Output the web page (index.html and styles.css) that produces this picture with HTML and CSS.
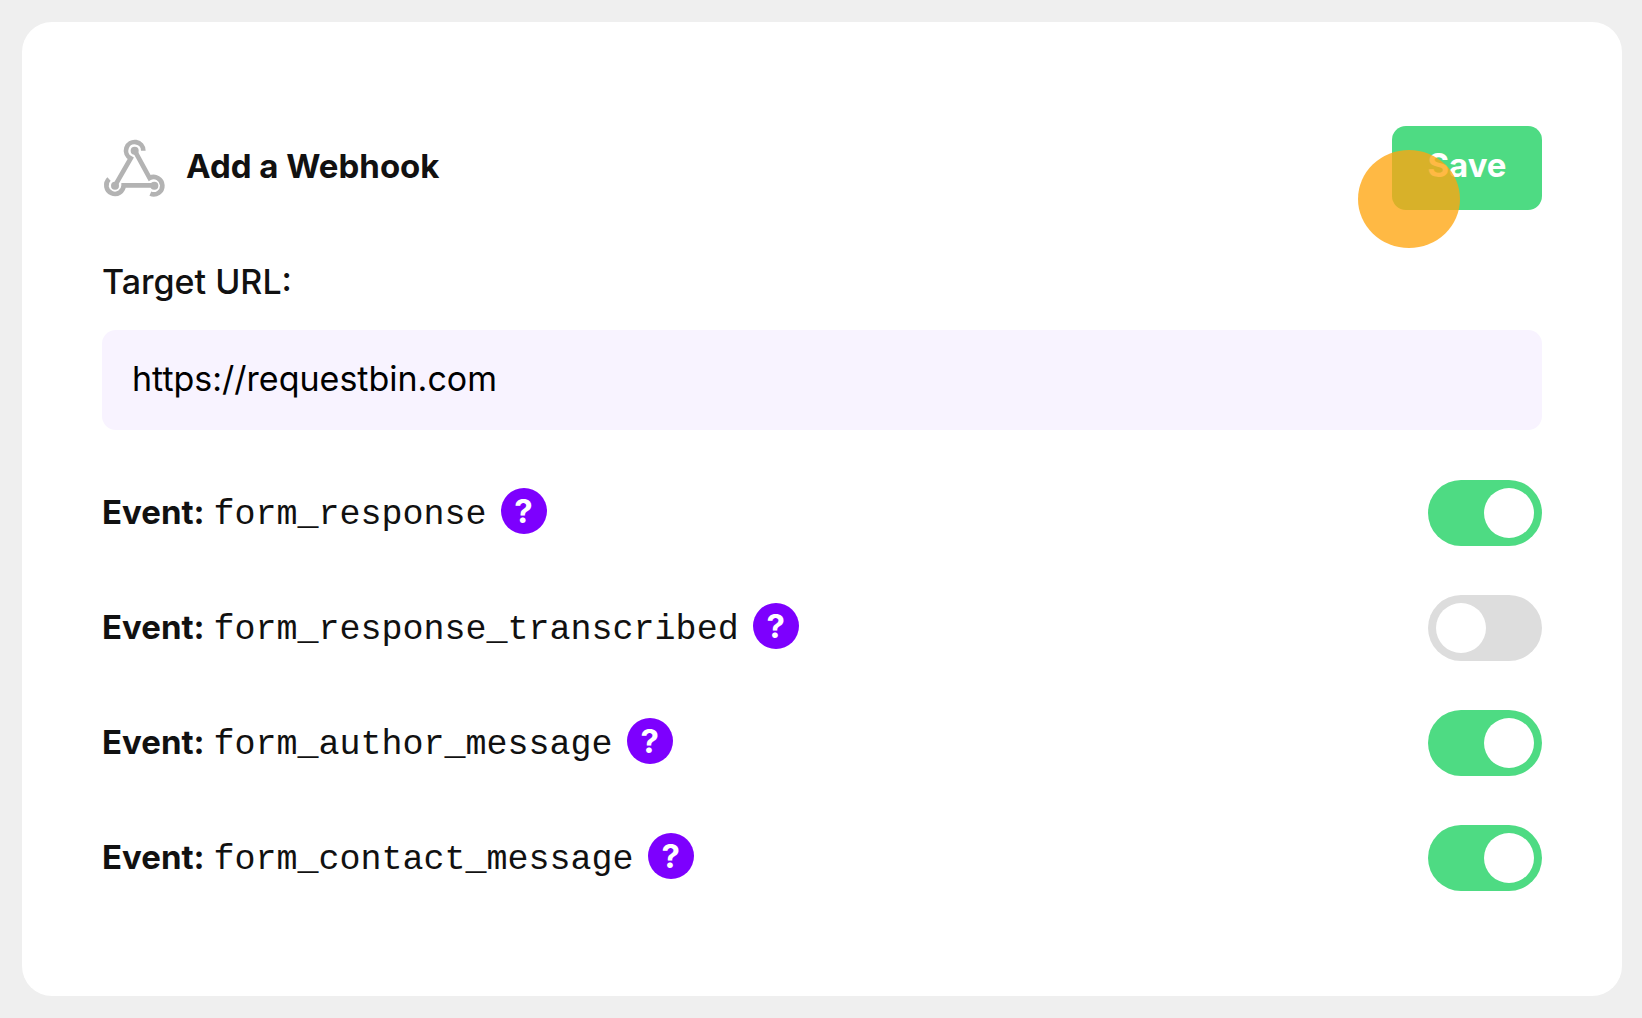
FILE: index.html
```html
<!DOCTYPE html>
<html lang="en">
<head>
<meta charset="utf-8">
<meta name="viewport" content="width=device-width, initial-scale=1">
<title>Add a Webhook</title>
<link rel="stylesheet" href="styles.css">
</head>
<body>
<main class="card">
  <form class="form">
    <header class="header">
      <svg class="logo" viewBox="36 54 195 183" aria-hidden="true">
        <g fill="none" stroke="#b3b3b3" stroke-width="14">
          <path d="M160 92A26 26 0 1 0 122 115L75 197"/>
          <path d="M134 92L179 174A26 26 0 1 1 181 221"/>
          <path d="M57 177A26 26 0 1 0 101 196H193"/>
        </g>
        <g fill="#b3b3b3">
          <circle cx="134" cy="92" r="12"/>
          <circle cx="75" cy="197" r="12"/>
          <circle cx="193" cy="197" r="12"/>
        </g>
      </svg>
      <h1 class="title">Add a Webhook</h1>
      <div class="save-wrap">
        <button class="save" type="button">Save</button>
        <span class="click-marker" aria-hidden="true"></span>
      </div>
    </header>

    <label class="label" for="target-url">Target URL:</label>
    <input class="url" id="target-url" type="text" value="https://requestbin.com">

    <div class="events">
      <div class="event">
        <label class="event-label" for="e1"><strong>Event:</strong> <code>form_response</code></label>
        <button class="help" type="button" aria-label="About form_response">?</button>
        <input class="toggle" id="e1" type="checkbox" checked>
      </div>
      <div class="event">
        <label class="event-label" for="e2"><strong>Event:</strong> <code>form_response_transcribed</code></label>
        <button class="help" type="button" aria-label="About form_response_transcribed">?</button>
        <input class="toggle" id="e2" type="checkbox">
      </div>
      <div class="event">
        <label class="event-label" for="e3"><strong>Event:</strong> <code>form_author_message</code></label>
        <button class="help" type="button" aria-label="About form_author_message">?</button>
        <input class="toggle" id="e3" type="checkbox" checked>
      </div>
      <div class="event">
        <label class="event-label" for="e4"><strong>Event:</strong> <code>form_contact_message</code></label>
        <button class="help" type="button" aria-label="About form_contact_message">?</button>
        <input class="toggle" id="e4" type="checkbox" checked>
      </div>
    </div>
  </form>
</main>
</body>
</html>
```

FILE: styles.css
```css
* {
  box-sizing: border-box;
}

body {
  margin: 0;
  padding: 22px 20px 22px 22px;
  min-height: 100vh;
  display: flex;
  background: #efefef;
  color: #111;
  font-family: Inter, "Liberation Sans", sans-serif;
  font-size: 34px;
  line-height: 44px;
}

button,
input {
  margin: 0;
  border: 0;
  font: inherit;
}

.card {
  flex: 1;
  padding: 104px 80px 80px;
  border-radius: 30px;
  background: #fff;
}

.form {
  display: flex;
  flex-direction: column;
}

.header {
  display: flex;
  align-items: center;
  margin-bottom: 50px;
}

.logo {
  width: 65px;
  height: 61px;
}

.title {
  margin: 0 auto 0 19px;
  padding-bottom: 4px;
  font-size: 33px;
  font-weight: 700;
}

.save-wrap {
  position: relative;
}

.save {
  display: block;
  width: 150px;
  height: 84px;
  padding: 0 0 6px;
  border-radius: 14px;
  background: #4edb83;
  color: #fff;
  font-size: 33px;
  font-weight: 700;
}

.click-marker {
  position: absolute;
  top: 24px;
  left: -34px;
  width: 102px;
  height: 98px;
  border-radius: 50%;
  background: rgba(255, 165, 16, 0.78);
  pointer-events: none;
}

.label {
  margin-bottom: 26px;
  font-weight: 500;
}

.url {
  width: 100%;
  height: 100px;
  padding: 0 30px 4px;
  border-radius: 14px;
  background: #f8f3ff;
  color: #000;
}

.events {
  display: flex;
  flex-direction: column;
  gap: 49px;
  margin-top: 50px;
}

.event {
  display: flex;
  align-items: center;
}

.event-label {
  display: flex;
  align-items: baseline;
  gap: 9px;
}

.event-label strong {
  font-size: 33px;
  font-weight: 700;
}

.event-label code {
  font-family: "Liberation Mono", monospace;
  font-size: 35px;
}

.help {
  width: 46px;
  height: 46px;
  margin: 0 auto 4px 14px;
  padding: 0;
  border-radius: 50%;
  background: #7d00fe;
  color: #fff;
  font-size: 33px;
  font-weight: 700;
}

.toggle {
  appearance: none;
  display: flex;
  width: 114px;
  height: 66px;
  padding: 8px;
  border-radius: 33px;
  background: #ddd;
}

.toggle::before {
  content: "";
  width: 50px;
  height: 50px;
  border-radius: 50%;
  background: #fff;
}

.toggle:checked {
  justify-content: flex-end;
  background: #4edb83;
}
```
